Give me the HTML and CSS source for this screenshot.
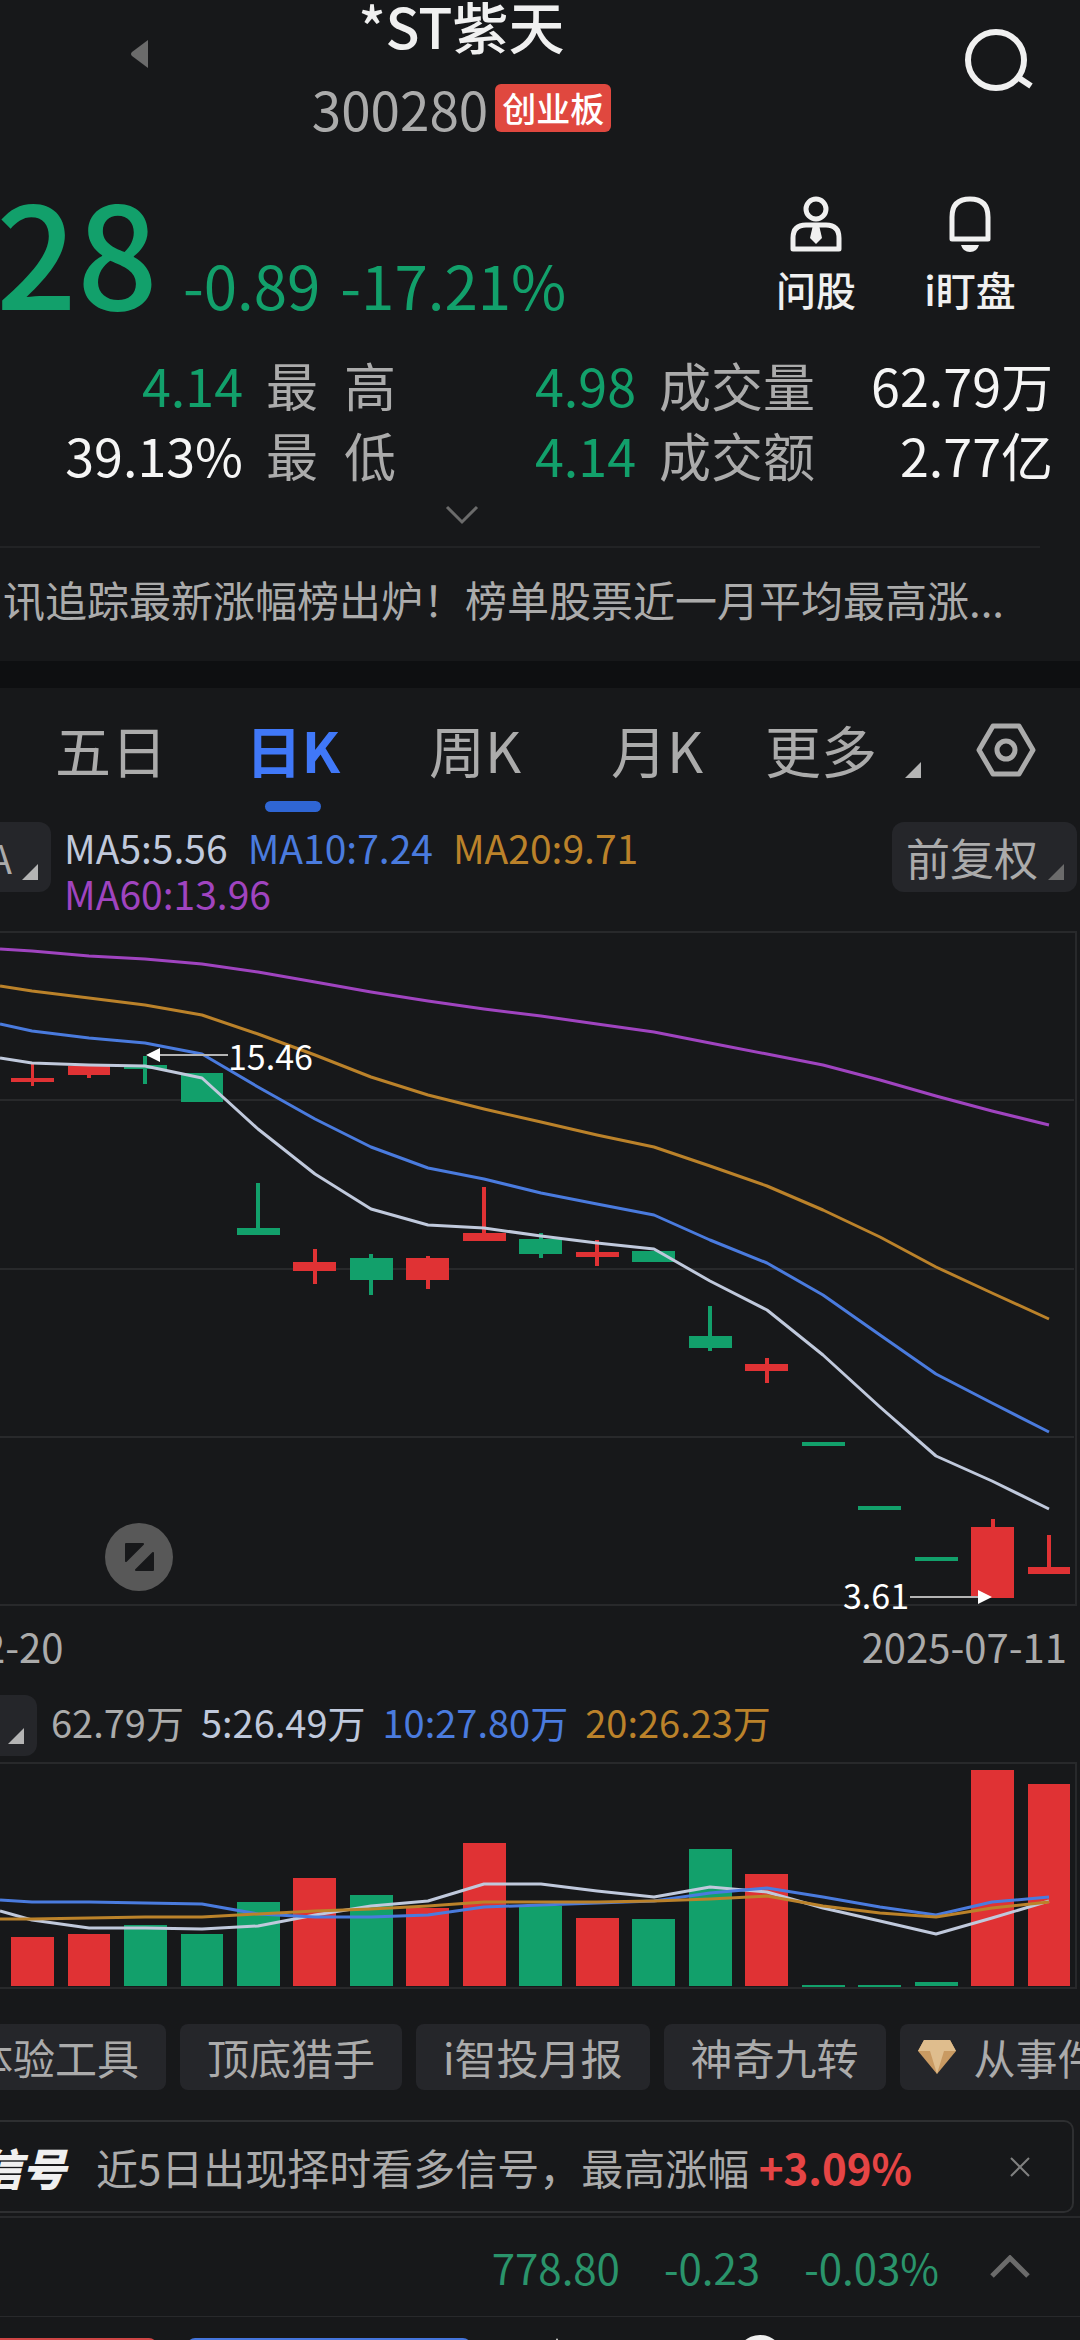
FILE: index.html
```html
<!DOCTYPE html>
<html lang="zh-CN">
	<head>
		<meta charset="UTF-8">
		<meta name="viewport" content="width=device-width, initial-scale=1.0">
		<title>*ST紫天 300280</title>
		<link rel="stylesheet" href="styles.css">
	</head>

	<body>
		<header class="top">
			<button class="prev" aria-label="上一只"><svg viewBox="0 0 18 28"><path d="M17 0V28L1 16Q-1 14 1 12Z"/></svg></button>
			<div class="stock">
				<h1>*ST紫天</h1>
				<p class="code">300280<span class="board">创业板</span></p>
			</div>
			<button class="search" aria-label="搜索"><svg viewBox="0 0 72 64"><circle cx="31" cy="31" r="28"/><path d="M54 49L66 57"/></svg></button>
		</header>

		<section class="price">
			<strong class="now">28</strong>
			<span class="change">-0.89</span>
			<span class="change">-17.21%</span>
			<div class="tools">
				<a href="#ask">
					<svg viewBox="0 0 56 56"><circle cx="28" cy="13" r="10"/><path d="M5 53V42Q5 29 18 29H38Q51 29 51 42V53Z"/><path class="solid" d="M25 29H31L34 42L28 48L22 42Z"/></svg>
					问股
				</a>
				<a href="#watch">
					<svg viewBox="0 0 56 56"><path d="M10 43V21Q10 3 28 3T46 21V43Z"/><path class="solid" d="M19 49H37Q35 56 28 56T19 49Z"/></svg>
					i盯盘
				</a>
			</div>
		</section>

		<table class="stats">
			<colgroup><col class="c1"><col class="c2"><col class="c3"><col class="c4"><col></colgroup>
			<tr>
				<td class="down">4.14</td>
				<th>最 高</th>
				<td class="down">4.98</td>
				<th>成交量</th>
				<td>62.79万</td>
			</tr>
			<tr>
				<td>39.13%</td>
				<th>最 低</th>
				<td class="down">4.14</td>
				<th>成交额</th>
				<td>2.77亿</td>
			</tr>
		</table>
		<button class="expand" aria-label="展开"><svg viewBox="0 0 34 20"><path d="M2 2L17 17L32 2"/></svg></button>

		<p class="news"><a href="#news">讯追踪最新涨幅榜出炉！榜单股票近一月平均最高涨...</a></p>

		<nav class="tabs">
			<a href="#5d">五日</a>
			<a href="#day" class="active">日K</a>
			<a href="#week">周K</a>
			<a href="#month">月K</a>
			<a href="#more" class="more">更多<svg class="tri" viewBox="0 0 16 16"><path d="M16 0V16H0Z"/></svg></a>
			<button class="setting" aria-label="设置"><svg viewBox="0 0 60 54"><path d="M17 3H43L57 27L43 51H17L3 27Z"/><circle cx="30" cy="27" r="9"/></svg></button>
		</nav>

		<div class="ma">
			<button class="pick">A<svg class="tri" viewBox="0 0 16 16"><path d="M16 0V16H0Z"/></svg></button>
			<div class="values">
				<span class="m5">MA5:5.56</span>
				<span class="m10">MA10:7.24</span>
				<span class="m20">MA20:9.71</span>
				<span class="m60">MA60:13.96</span>
			</div>
			<button class="pick adjust">前复权<svg class="tri" viewBox="0 0 16 16"><path d="M16 0V16H0Z"/></svg></button>
		</div>

		<!-- K線圖 -->
		<svg class="chart" viewBox="0 0 1080 676">
			<path class="grid" d="M0 1H1076V674H0M0 169H1074M0 338H1074M0 506H1074"/>
			<g class="red">
				<path d="M31 132h3v23h-3zM11 147h43v4h-43z"/>
				<path d="M87 144h4v3h-4zM68 135h42v9h-42z"/>
				<path d="M313 318h4v35h-4zM293 331h43v9h-43z"/>
				<path d="M426 325h4v33h-4zM406 327h43v22h-43z"/>
				<path d="M482 256h4v46h-4zM463 302h43v8h-43z"/>
				<path d="M595 309h4v26h-4zM576 321h43v5h-43z"/>
				<path d="M765 427h4v25h-4zM745 433h43v7h-43z"/>
				<path d="M991 588h4v9h-4zM971 596h43v71h-43z"/>
				<path d="M1047 604h4v33h-4zM1028 636h42v7h-42z"/>
			</g>
			<g class="green">
				<path d="M143 125h4v28h-4zM124 134h43v4h-43z"/>
				<path d="M181 142h42v29h-42z"/>
				<path d="M256 252h4v46h-4zM237 297h43v7h-43z"/>
				<path d="M369 323h4v41h-4zM350 327h43v22h-43z"/>
				<path d="M539 302h4v25h-4zM519 308h43v15h-43z"/>
				<path d="M632 320h43v11h-43z"/>
				<path d="M708 375h4v45h-4zM689 405h43v12h-43z"/>
				<path d="M802 511h43v4h-43zM858 575h43v4h-43zM915 626h43v4h-43z"/>
			</g>
			<polyline class="l60" points="0,18 32,20 89,25 145,28 202,33 258,41 315,51 371,61 428,70 484,78 541,85 597,93 654,101 710,112 767,123 823,134 880,149 936,165 992,180 1049,194"/>
			<polyline class="l20" points="0,55 32,60 89,67 145,74 202,84 258,103 315,124 371,146 428,164 484,178 541,191 597,204 654,216 710,235 767,255 823,279 880,306 936,336 992,362 1049,388"/>
			<polyline class="l10" points="0,93 32,100 89,107 145,112 202,123 258,156 315,188 371,216 428,237 484,248 541,262 597,273 654,284 710,309 767,332 823,364 880,404 936,443 992,472 1049,501"/>
			<polyline class="l5" points="0,127 32,132 89,134 145,135 202,147 258,198 315,243 371,278 428,294 484,297 541,305 597,312 654,318 710,350 767,379 823,424 880,476 936,525 992,550 1049,578"/>
			<path class="pointer" d="M160 124H228M910 666H978"/>
			<path class="head" d="M146 124L160 117V131ZM992 666L978 659V673Z"/>
			<text x="228" y="139">15.46</text>
			<text x="843" y="678">3.61</text>
			<circle class="full" cx="139" cy="626" r="34"/>
			<path class="corner" d="M126 613H143L126 630ZM153 622V639H136Z"/>
		</svg>
		<div class="dates"><span>2-20</span><span>2025-07-11</span></div>

		<div class="vol">
			<button class="pick" aria-label="成交量"><svg class="tri" viewBox="0 0 16 16"><path d="M16 0V16H0Z"/></svg></button>
			<span>62.79万</span>
			<span class="m5">5:26.49万</span>
			<span class="m10">10:27.80万</span>
			<span class="m20">20:26.23万</span>
		</div>

		<!-- 成交量 -->
		<svg class="chart" viewBox="0 0 1080 227">
			<path class="grid" d="M0 1H1076V226H0"/>
			<path class="red" d="M11 175h43v49h-43zM68 172h42v52h-42zM293 116h43v108h-43zM406 146h43v78h-43zM463 81h43v143h-43zM576 156h43v68h-43zM745 112h43v112h-43zM971 8h43v216h-43zM1028 22h42v202h-42z"/>
			<path class="green" d="M124 163h43v61h-43zM181 172h42v52h-42zM237 140h43v84h-43zM350 133h43v91h-43zM519 144h43v80h-43zM632 157h43v67h-43zM689 87h43v137h-43zM802 223h43v2h-43zM858 223h43v2h-43zM915 220h43v4h-43z"/>
			<polyline class="l5" points="0,149 32,158 89,166 145,166 202,167 258,164 315,153 371,144 428,139 484,122 541,122 597,129 654,135 710,125 767,130 823,146 880,159 936,172 992,156 1049,139"/>
			<polyline class="l10" points="0,138 32,140 89,140 145,141 202,142 258,152 315,155 371,155 428,153 484,145 541,143 597,141 654,139 710,131 767,126 823,135 880,145 936,153 992,140 1049,135"/>
			<polyline class="l20" points="0,157 32,157 89,156 145,155 202,155 258,152 315,149 371,147 428,144 484,140 541,140 597,140 654,139 710,137 767,134 823,144 880,151 936,155 992,146 1049,140"/>
		</svg>

		<div class="chips">
			<button>体验工具</button>
			<button>顶底猎手</button>
			<button>i智投月报</button>
			<button>神奇九转</button>
			<button class="vip"><svg viewBox="0 0 38 34"><path d="M6 0H32L38 11L19 34L0 11Z"/><path class="shine" d="M0 11H38L32 0H6ZM12 11L19 34L26 11Z"/></svg>从事件</button>
		</div>

		<section class="signal">
			<b class="brand">信号</b>
			<p>近5日出现择时看多信号，最高涨幅 <b>+3.09%</b></p>
			<button class="close" aria-label="关闭"><svg viewBox="0 0 20 20"><path d="M1 1L19 19M19 1L1 19"/></svg></button>
		</section>

		<section class="index">
			<span>778.80</span>
			<span>-0.23</span>
			<span>-0.03%</span>
			<button aria-label="展开指数"><svg viewBox="0 0 42 24"><path d="M3 21L21 3L39 21"/></svg></button>
		</section>

		<footer class="trade">
			<button class="buy" aria-label="买入"></button>
			<button class="sell" aria-label="卖出"></button>
			<svg class="more1" viewBox="0 0 8 8"><path d="M4 0L8 8H0Z"/></svg>
			<svg class="more2" viewBox="0 0 48 48"><circle cx="24" cy="24" r="24"/></svg>
		</footer>
	</body>
</html>
```
FILE: styles.css
```css
* {
	box-sizing: border-box;
}
body {
	margin: 0;
	height: 100vh;
	overflow: hidden;
	display: flex;
	flex-direction: column;
	background: #17181a;
	color: #ababab;
	font-family: "Noto Sans CJK SC", sans-serif;
	font-size: 42px;
	white-space: nowrap;
}
body > * {
	flex-shrink: 0;
}
h1, p {
	margin: 0;
}
a {
	color: inherit;
	text-decoration: none;
}
button {
	padding: 0;
	border: 0;
	background: none;
	color: inherit;
	font: inherit;
	cursor: pointer;
}
svg {
	display: block;
	fill: none;
}

/* 頂部 */
.top {
	display: flex;
	justify-content: space-between;
	align-items: flex-start;
	padding: 0 40px 0 131px;
}
.prev {
	margin-top: 40px;
}
.prev svg {
	width: 18px;
	height: 28px;
	fill: #6b6b6b;
}
.stock {
	padding-right: 188px;
	text-align: center;
}
h1 {
	font-size: 56px;
	line-height: 50px;
	font-weight: 500;
	color: #f0f0f0;
}
.code {
	display: flex;
	align-items: center;
	gap: 7px;
	height: 48px;
	margin-top: 34px;
	font-size: 53px;
	line-height: 48px;
}
.board {
	padding: 0 7px;
	border-radius: 6px;
	background: #e0483f;
	color: #fff;
	font-size: 34px;
	font-weight: 500;
}
.search {
	margin-top: 29px;
}
.search svg {
	width: 78px;
	height: 64px;
	stroke: #f0f0f0;
	stroke-width: 6;
}

/* 價格 */
.price {
	display: flex;
	align-items: baseline;
	margin-top: 55px;
	height: 163px;
	padding-right: 33px;
	color: #12a06b;
}
.now {
	margin-left: -4px;
	font-size: 142px;
	line-height: 122px;
	font-weight: 500;
}
.change {
	margin-left: 20px;
	font-size: 60px;
	line-height: 60px;
}
.now + .change {
	margin-left: 25px;
}
.tools {
	display: flex;
	align-self: flex-start;
	margin: 9px 0 0 auto;
	color: #f0f0f0;
	font-size: 40px;
	line-height: 74px;
	font-weight: 500;
}
.tools a {
	width: 154px;
	text-align: center;
}
.tools svg {
	width: 56px;
	height: 56px;
	margin: 0 auto;
	stroke: #f0f0f0;
	stroke-width: 5;
	stroke-linejoin: round;
}
.tools .solid {
	fill: #f0f0f0;
	stroke: none;
}
.stats {
	width: calc(100% - 27px);
	table-layout: fixed;
	border-collapse: collapse;
	font-size: 52px;
	line-height: 70px;
}
.stats th, .stats td {
	padding: 0;
}
.stats td {
	padding-right: 23px;
	text-align: right;
	color: #f5f5f5;
}
.stats td:last-child {
	padding-right: 0;
}
.stats th {
	font-weight: 400;
	text-align-last: justify;
}
.stats .down {
	color: #12a06b;
}
.c1 { width: 266px; }
.c2 { width: 130px; }
.c3 { width: 263px; }
.c4 { width: 156px; }
.expand {
	height: 56px;
	margin-right: 156px;
}
.expand svg {
	width: 34px;
	height: 20px;
	margin: -6px auto 0;
	stroke: #6b6b6b;
	stroke-width: 3;
}

/* 快訊 */
.news {
	display: flex;
	justify-content: flex-end;
	margin-right: 40px;
	padding: 0 36px 11px 0;
	border-top: 2px solid #222325;
	line-height: 102px;
}
.tabs {
	display: flex;
	align-items: center;
	height: 151px;
	padding: 0 44px 0 20px;
	border-top: 27px solid #0e0f11;
	font-size: 56px;
	line-height: 122px;
}
.tabs a {
	position: relative;
	width: 182px;
	height: 124px;
	text-align: center;
}
.tabs .active {
	color: #4078f8;
	font-weight: 700;
}
.tabs .active::after {
	content: "";
	position: absolute;
	left: 63px;
	bottom: 0;
	width: 56px;
	height: 11px;
	border-radius: 6px;
	background: #2f66d4;
}
.tabs .more {
	display: flex;
	justify-content: space-between;
	width: 156px;
	margin-left: 17px;
}
.tri {
	flex-shrink: 0;
	width: 16px;
	height: 16px;
	fill: #b4b4b4;
}
.more .tri {
	margin-top: 74px;
}
.setting {
	margin: 0 0 0 auto;
}
.setting svg {
	width: 60px;
	height: 54px;
	stroke: #ababab;
	stroke-width: 5;
	stroke-linejoin: round;
}

/* 均線 */
.ma {
	display: flex;
	height: 109px;
	margin-top: 10px;
	padding-right: 3px;
	font-size: 39px;
	line-height: 46px;
}
.pick {
	display: flex;
	align-items: center;
	justify-content: flex-end;
	width: 51px;
	height: 70px;
	padding-right: 13px;
	border-radius: 0 12px 12px 0;
	background: #25262a;
}
.pick .tri {
	margin: 42px 0 14px 10px;
	align-self: flex-start;
}
.values {
	display: flex;
	flex-wrap: wrap;
	align-content: flex-start;
	column-gap: 20px;
	max-width: 700px;
	margin-left: 13px;
	padding-top: 2px;
}
.adjust {
	width: 185px;
	margin-left: auto;
	border-radius: 12px;
	font-size: 44px;
}
.adjust .tri {
	fill: #6b6b6b;
}
.m5 { color: #c0c9dc; }
.m10 { color: #4a7bde; }
.m20 { color: #bb822a; }
.m60 { color: #a044c0; }

.chart {
	width: 100%;
	overflow: visible;
}
.chart .grid {
	stroke: #28292b;
	stroke-width: 2;
}
.red { fill: #e03234; }
.green { fill: #12a06b; }
.chart polyline {
	stroke-width: 3;
	stroke-linejoin: round;
}
.l5 { stroke: #c0c9dc; }
.l10 { stroke: #4a7bde; }
.l20 { stroke: #bb822a; }
.l60 { stroke: #a044c0; }
.pointer {
	stroke: #b4b4b4;
	stroke-width: 2;
}
.head, .chart text {
	fill: #fff;
}
.chart text {
	font-size: 34px;
}
.full { fill: #585858; }
.corner {
	fill: #17181a;
	stroke: #17181a;
	stroke-width: 2;
	stroke-linejoin: round;
}
.dates {
	display: flex;
	justify-content: space-between;
	padding-right: 13px;
	font-size: 40px;
	line-height: 78px;
}
.dates span:first-child {
	margin-left: -17px;
}
.vol {
	display: flex;
	gap: 17px;
	height: 67px;
	margin-top: 10px;
	font-size: 38px;
	line-height: 54px;
}
.vol .pick {
	width: 37px;
	height: 61px;
	margin-right: -3px;
}
.vol .tri {
	margin: 33px 0 0;
}

/* 工具列 */
.chips {
	display: flex;
	gap: 14px;
	margin: 35px 0 0 -56px;
}
.chips button {
	display: flex;
	flex-shrink: 0;
	align-items: center;
	height: 66px;
	padding: 0 27px;
	border-radius: 8px;
	background: #25262a;
	line-height: 62px;
}
.chips .vip {
	gap: 18px;
	padding-left: 18px;
}
.vip svg {
	width: 38px;
	height: 34px;
	fill: #c99a62;
}
.vip .shine {
	fill: #dfbd8d;
}
.signal {
	display: flex;
	align-items: center;
	height: 93px;
	margin: 30px 6px 3px 0;
	padding-right: 42px;
	border: 2px solid #2e2f31;
	border-left: 0;
	border-radius: 0 10px 10px 0;
	line-height: 80px;
}
.brand {
	margin: 0 30px 0 -22px;
	color: #f0f0f0;
	font-size: 44px;
	font-weight: 900;
	font-style: italic;
}
.signal p b {
	color: #e64545;
}
.close {
	margin-left: auto;
}
.close svg {
	width: 20px;
	height: 20px;
	stroke: #808080;
	stroke-width: 2;
}
.index {
	display: flex;
	justify-content: flex-end;
	align-items: center;
	gap: 44px;
	height: 101px;
	padding-right: 49px;
	border-top: 2px solid #28292b;
	border-bottom: 1px solid #28292b;
	color: #2a946b;
	line-height: 92px;
}
.index button {
	margin-left: 6px;
}
.index svg {
	width: 42px;
	height: 24px;
	stroke: #6b6b6b;
	stroke-width: 5;
}

/* 底部交易按鈕 */
.trade {
	display: flex;
	flex-shrink: 1;
	align-items: flex-start;
	min-height: 0;
	padding-top: 18px;
}
.buy, .sell {
	height: 90px;
	margin-top: 3px;
	border-radius: 0 8px 0 0;
	background: #d04545;
}
.buy {
	width: 157px;
}
.sell {
	width: 284px;
	margin-left: 30px;
	border-radius: 8px;
	background: #4575dc;
}
.trade svg {
	fill: #f0f0f0;
}
.more1 {
	width: 8px;
	height: 8px;
	margin: 3px 0 0 82px;
}
.more2 {
	width: 48px;
	height: 48px;
	margin-left: 175px;
}
```
